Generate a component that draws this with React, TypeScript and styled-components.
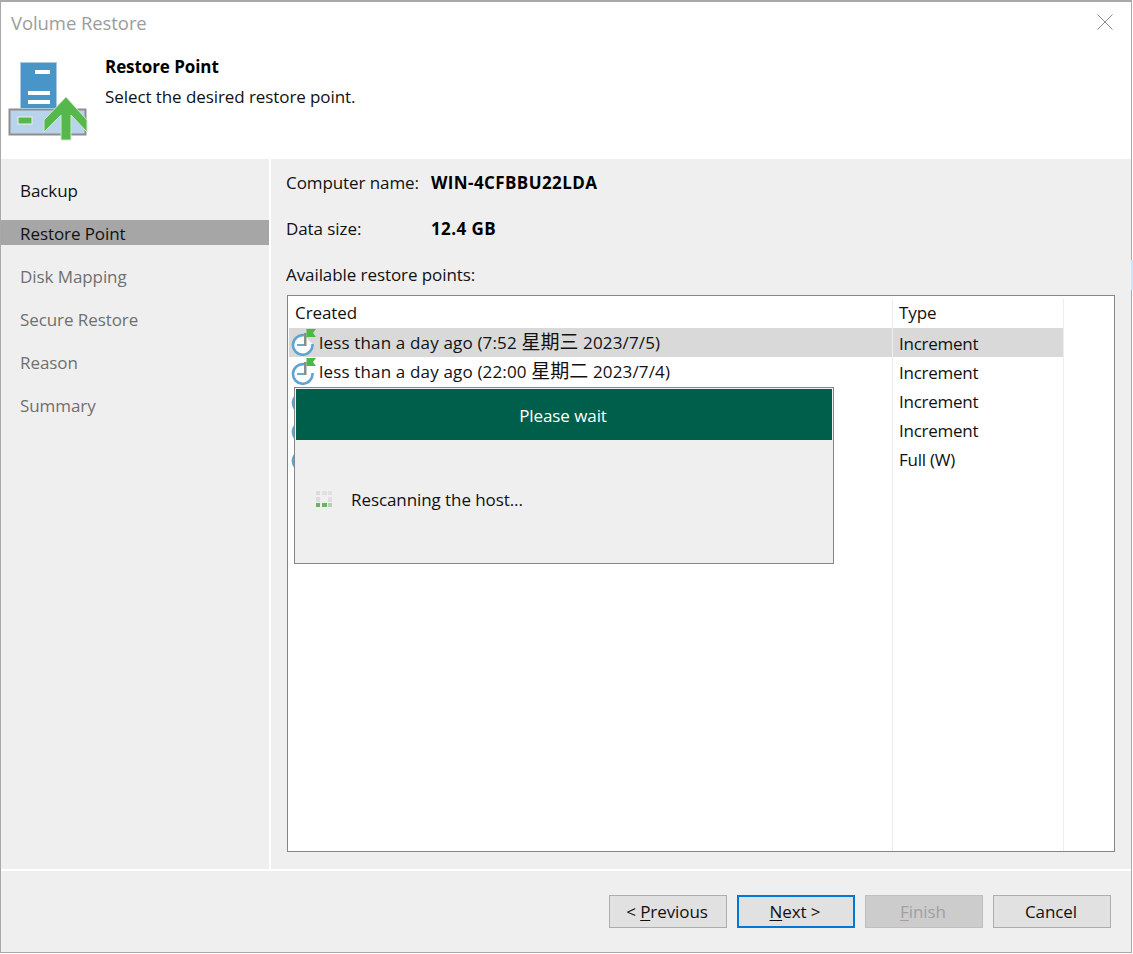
import React from "react";
import styled, { createGlobalStyle } from "styled-components";

const Global = createGlobalStyle`
  html, body {
    margin: 0;
    padding: 0;
    background: #fff;
  }
  body {
    font-family: "Open Sans", "Noto Sans CJK SC", sans-serif;
    font-size: 17px;
    letter-spacing: -0.08px;
    color: #111;
  }
`;

const Dialog = styled.div`
  position: relative;
  box-sizing: border-box;
  width: 1132px;
  height: 953px;
  border: 1px solid #a9a9a9;
  border-top-width: 2px;
  display: flex;
  flex-direction: column;
  background: #fff;
`;

const EdgePeek = styled.div`
  position: absolute;
  left: 1130px;
  top: 258px;
  width: 3px;
  height: 30px;
  background: #cfe4f7;
`;

const TitleBar = styled.div`
  height: 42px;
  display: flex;
  align-items: center;
  justify-content: space-between;
  padding: 0 18px 2px 10px;
  box-sizing: border-box;
  color: #9c9c9c;
  font-size: 18.5px;
  flex: none;
`;

const Banner = styled.div`
  height: 115px;
  flex: none;
  display: flex;
  align-items: flex-start;
  padding: 10px 0 0 7px;
  box-sizing: border-box;
`;

const BannerIcon = styled.div`
  margin-top: 8px;
  display: flex;
`;

const BannerText = styled.div`
  margin-left: 17px;
  display: flex;
  flex-direction: column;
  gap: 9px;
  padding-top: 1px;
`;

const BannerTitle = styled.div`
  font-weight: 700;
  line-height: 22px;
  margin-top: 1px;
  margin-bottom: -1px;
  color: #000;
`;

const BannerSub = styled.div`
  line-height: 22px;
`;

const Middle = styled.div`
  flex: 1;
  display: flex;
  min-height: 0;
`;

const Sidebar = styled.nav`
  width: 268px;
  flex: none;
  background: #efefef;
  padding-top: 18px;
  box-sizing: border-box;
  display: flex;
  flex-direction: column;
  gap: 18px;
`;

const Step = styled.div<{ $active?: boolean; $enabled?: boolean }>`
  height: 25px;
  line-height: 27px;
  padding-left: 19px;
  background: ${(p) => (p.$active ? "#a6a6a6" : "transparent")};
  color: ${(p) => (p.$active || p.$enabled ? "#111" : "#707070")};
`;

const Content = styled.main`
  flex: 1;
  margin-left: 2px;
  background: #efefef;
  padding: 0 16px 0 15px;
  box-sizing: border-box;
  display: flex;
  flex-direction: column;
`;

const InfoRow = styled.div`
  height: 46px;
  display: flex;
  align-items: center;
`;

const InfoLabel = styled.span`
  width: 145px;
  flex: none;
`;

const InfoValue = styled.span`
  font-weight: 700;
  color: #000;
  letter-spacing: 0.4px;
`;

const ListLabel = styled.div`
  height: 24px;
  line-height: 24px;
  margin: 12px 0 8px;
`;

const ListBox = styled.div`
  position: relative;
  width: 828px;
  height: 557px;
  margin-left: 1px;
  box-sizing: border-box;
  border: 1px solid #85858f;
  background: #fff;
  padding: 0 0 0 1px;
  display: grid;
  grid-template-columns: 603px 171px;
  grid-auto-rows: 29px;
  grid-template-rows: 32px;
  align-content: start;
`;

const ColumnLine = styled.div<{ $left: number }>`
  position: absolute;
  top: 3px;
  bottom: 0;
  left: ${(p) => p.$left}px;
  width: 1px;
  background: #e6eef6;
`;

const HeadCell = styled.div`
  display: flex;
  align-items: center;
  padding: 1px 0 0 6px;
`;

const TypeHead = styled(HeadCell)`
  padding-left: 7px;
`;

const Cell = styled.div<{ $selected?: boolean }>`
  display: flex;
  align-items: center;
  background: ${(p) => (p.$selected ? "#d9d9d9" : "transparent")};
  padding-left: 2px;
  white-space: nowrap;
`;

const TypeCell = styled(Cell)`
  padding: 1px 0 0 7px;
  letter-spacing: -0.25px;
`;

const RowText = styled.span`
  margin-left: 3px;
  letter-spacing: 0.16px;
`;

const Cjk = styled.span`
  font-size: 19px;
  line-height: 1;
  letter-spacing: 0;
`;

const WaitBox = styled.div`
  position: absolute;
  left: 6px;
  top: 91px;
  width: 540px;
  height: 177px;
  box-sizing: border-box;
  border: 1px solid #85858f;
  background: #efefef;
  display: flex;
  flex-direction: column;
`;

const WaitHead = styled.div`
  height: 51px;
  margin: 1px 1px 0;
  padding: 1px 2px 0 0;
  box-sizing: border-box;
  background: #005f4b;
  color: #fff;
  display: flex;
  align-items: center;
  justify-content: center;
  flex: none;
`;

const WaitBody = styled.div`
  flex: 1;
  display: flex;
  align-items: center;
  gap: 18px;
  padding: 0 0 0 21px;
  margin-bottom: 4px;
`;

const Footer = styled.footer`
  height: 81px;
  flex: none;
  margin-top: 2px;
  background: #efefef;
  display: flex;
  justify-content: flex-end;
  gap: 10px;
  padding: 24px 20px 0 0;
  box-sizing: border-box;
`;

const Button = styled.button<{ $focused?: boolean }>`
  width: 118px;
  height: 33px;
  box-sizing: border-box;
  font: inherit;
  letter-spacing: inherit;
  color: #111;
  background: #e1e1e1;
  border: ${(p) => (p.$focused ? "2px solid #0078d7" : "1px solid #adadad")};
  padding: 0 2px 0 0;

  &:disabled {
    background: #cccccc;
    border-color: #bfbfbf;
    color: #a0a0a0;
  }
`;

const Key = styled.span`
  text-decoration: underline;
  text-underline-offset: 2px;
`;

const CloseIcon = () => (
  <svg width="16" height="16" viewBox="0 0 16 16">
    <path d="M0.5 0.5 L15.5 15.5 M15.5 0.5 L0.5 15.5" stroke="#8a8a8a" strokeWidth="1" fill="none" />
  </svg>
);

const RestoreIcon = () => (
  <svg width="80" height="80" viewBox="0 0 80 80">
    <rect x="1.5" y="47.5" width="76" height="25" fill="#b9d3ec" stroke="#8e8e8e" strokeWidth="2" />
    <rect x="12.5" y="0.5" width="36" height="46" fill="#4a95c7" stroke="#a7cbe4" strokeWidth="1" />
    <rect x="27" y="8" width="15" height="4" fill="#fff" />
    <rect x="20" y="29" width="22" height="4" fill="#fff" />
    <rect x="20" y="38" width="22" height="4" fill="#fff" />
    <rect x="10" y="55" width="14" height="7" fill="#56b84c" stroke="#eaf3e5" strokeWidth="1" />
    <path
      d="M58 35 L79 58 L79 70 L63 53 L63 78 L53 78 L53 53 L36 70 L36 58 Z"
      fill="#56b84c"
      stroke="#cfe8c8"
      strokeWidth="1"
    />
  </svg>
);

const ClockIcon = () => (
  <svg width="25" height="27" viewBox="0 0 25 27" style={{ flex: "none" }}>
    <path
      d="M13 6.2 A9.8 9.8 0 1 0 21.5 15"
      fill="#fbfdfe"
      stroke="#5fa3d0"
      strokeWidth="2.6"
    />
    <path d="M6 16 H14" stroke="#6ba9d2" strokeWidth="2" fill="none" />
    <rect x="13" y="4" width="2.5" height="13" fill="#84908c" />
    <path d="M15.5 0 H25 L22 4 L25 8 H15.5 Z" fill="#4cb848" />
  </svg>
);

const Spinner = () => (
  <svg width="17" height="17" viewBox="0 0 17 17" style={{ flex: "none" }}>
    <rect x="0" y="0" width="4" height="4" fill="#dcdcdc" />
    <rect x="6" y="0" width="5" height="4" fill="#e0e0e0" />
    <rect x="12" y="0" width="4" height="4" fill="#e0e0e0" />
    <rect x="0" y="6" width="4" height="5" fill="#dcdcdc" />
    <rect x="12" y="6" width="4" height="5" fill="#e0e0e0" />
    <rect x="0" y="12" width="4" height="4" fill="#66b85e" />
    <rect x="6" y="12" width="5" height="4" fill="#66b85e" />
    <rect x="12" y="12" width="4" height="4" fill="#b5cfb0" />
  </svg>
);

const steps = ["Backup", "Restore Point", "Disk Mapping", "Secure Restore", "Reason", "Summary"];

const rows = [
  { time: "7:52", day: "星期三", date: "2023/7/5", type: "Increment", selected: true },
  { time: "22:00", day: "星期二", date: "2023/7/4", type: "Increment" },
  { type: "Increment" },
  { type: "Increment" },
  { type: "Full (W)" },
];

export default function App() {
  return (
    <>
      <Global />
      <Dialog>
        <EdgePeek />
        <TitleBar>
          Volume Restore
          <CloseIcon />
        </TitleBar>
        <Banner>
          <BannerIcon>
            <RestoreIcon />
          </BannerIcon>
          <BannerText>
            <BannerTitle>Restore Point</BannerTitle>
            <BannerSub>Select the desired restore point.</BannerSub>
          </BannerText>
        </Banner>
        <Middle>
          <Sidebar>
            {steps.map((s, i) => (
              <Step key={s} $active={i === 1} $enabled={i === 0}>
                {s}
              </Step>
            ))}
          </Sidebar>
          <Content>
            <InfoRow>
              <InfoLabel>Computer name:</InfoLabel>
              <InfoValue>WIN-4CFBBU22LDA</InfoValue>
            </InfoRow>
            <InfoRow>
              <InfoLabel>Data size:</InfoLabel>
              <InfoValue>12.4 GB</InfoValue>
            </InfoRow>
            <ListLabel>Available restore points:</ListLabel>
            <ListBox>
              <ColumnLine $left={604} />
              <ColumnLine $left={775} />
              <HeadCell>Created</HeadCell>
              <TypeHead>Type</TypeHead>
              {rows.map((r, i) => (
                <React.Fragment key={i}>
                  <Cell $selected={r.selected}>
                    <ClockIcon />
                    {r.time && (
                      <RowText>
                        less than a day ago ({r.time} <Cjk>{r.day}</Cjk> {r.date})
                      </RowText>
                    )}
                  </Cell>
                  <TypeCell $selected={r.selected}>{r.type}</TypeCell>
                </React.Fragment>
              ))}
              <WaitBox>
                <WaitHead>Please wait</WaitHead>
                <WaitBody>
                  <Spinner />
                  Rescanning the host...
                </WaitBody>
              </WaitBox>
            </ListBox>
          </Content>
        </Middle>
        <Footer>
          <Button>
            &lt; <Key>P</Key>revious
          </Button>
          <Button $focused>
            <Key>N</Key>ext &gt;
          </Button>
          <Button disabled>
            <Key>F</Key>inish
          </Button>
          <Button>Cancel</Button>
        </Footer>
      </Dialog>
    </>
  );
}
